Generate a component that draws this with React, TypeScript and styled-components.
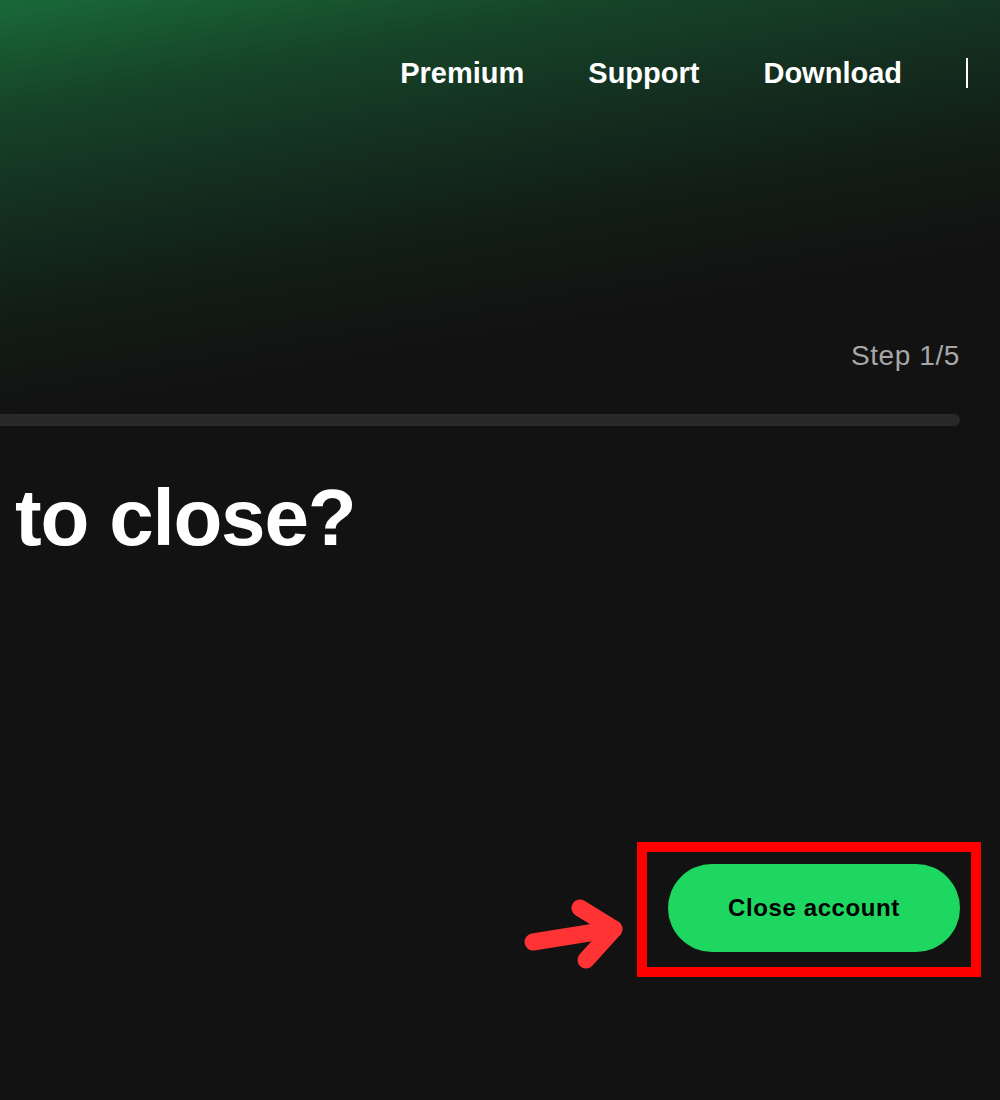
import React from 'react';
import styled, { createGlobalStyle } from 'styled-components';

const GlobalStyle = createGlobalStyle`
  html, body {
    margin: 0;
    padding: 0;
    background: #121212;
  }
  body {
    font-family: "Liberation Sans", Arial, sans-serif;
    -webkit-font-smoothing: antialiased;
  }
`;

const Page = styled.div`
  position: relative;
  width: 1000px;
  height: 1100px;
  overflow: hidden;
  background:
    linear-gradient(170deg, #19693a 0%, #164528 12%, #142f20 24%, #121d16 36%, #121212 48%, #121212 100%) 0 0 / 100% 700px no-repeat,
    #121212;
`;

const Nav = styled.nav`
  display: flex;
  justify-content: flex-end;
  align-items: center;
  gap: 64px;
  height: 60px;
  padding: 43px 32px 0 0;
`;

const NavLink = styled.a`
  font-size: 29px;
  font-weight: 700;
  color: #ffffff;
  letter-spacing: 0;
  text-decoration: none;
`;

const Divider = styled.span`
  width: 2px;
  height: 30px;
  background: #ffffff;
`;

const Content = styled.main`
  display: flex;
  flex-direction: column;
  padding: 0 40px 0 0;
`;

const StepRow = styled.div`
  display: flex;
  justify-content: flex-end;
  margin-top: 238px;
  font-size: 28px;
  letter-spacing: 0.6px;
  color: #a7a7a7;
  line-height: 30px;
`;

const Progress = styled.div`
  height: 12px;
  margin-top: 43px;
  border-radius: 0 6px 6px 0;
  background: #292929;
`;

const Title = styled.h1`
  margin: 47px 0 0 15px;
  font-size: 80px;
  font-weight: 700;
  letter-spacing: -1.2px;
  line-height: 90px;
  color: #ffffff;
`;

const ActionRow = styled.div`
  display: flex;
  justify-content: flex-end;
  margin-top: 301px;
`;

const PrimaryButton = styled.button`
  position: relative;
  width: 292px;
  height: 88px;
  border: none;
  border-radius: 44px;
  background: #1ed760;
  color: #000000;
  font-family: "Liberation Sans", Arial, sans-serif;
  font-size: 24px;
  font-weight: 700;
  letter-spacing: 0.6px;
  cursor: pointer;
`;

const Highlight = styled.span`
  position: absolute;
  left: -31px;
  top: -22px;
  width: 344px;
  height: 135px;
  box-sizing: border-box;
  border: 10px solid #ff0000;
  pointer-events: none;
`;

const Arrow = styled.svg`
  position: absolute;
  left: -140px;
  top: 36px;
  overflow: visible;
`;

export default function App() {
  return (
    <Page>
      <GlobalStyle />
      <Nav>
        <NavLink>Premium</NavLink>
        <NavLink>Support</NavLink>
        <NavLink>Download</NavLink>
        <Divider />
      </Nav>
      <Content>
        <StepRow>Step 1/5</StepRow>
        <Progress />
        <Title>to close?</Title>
        <ActionRow>
          <PrimaryButton>
            Close account
            <Highlight />
            <Arrow width="100" height="70" viewBox="0 0 100 70">
              <g stroke="#ff3333" strokeWidth="17" strokeLinecap="round" strokeLinejoin="round" fill="none">
                <line x1="5" y1="42" x2="86" y2="29" />
                <polyline points="52,8 86,29 58,60" />
              </g>
            </Arrow>
          </PrimaryButton>
        </ActionRow>
      </Content>
    </Page>
  );
}
